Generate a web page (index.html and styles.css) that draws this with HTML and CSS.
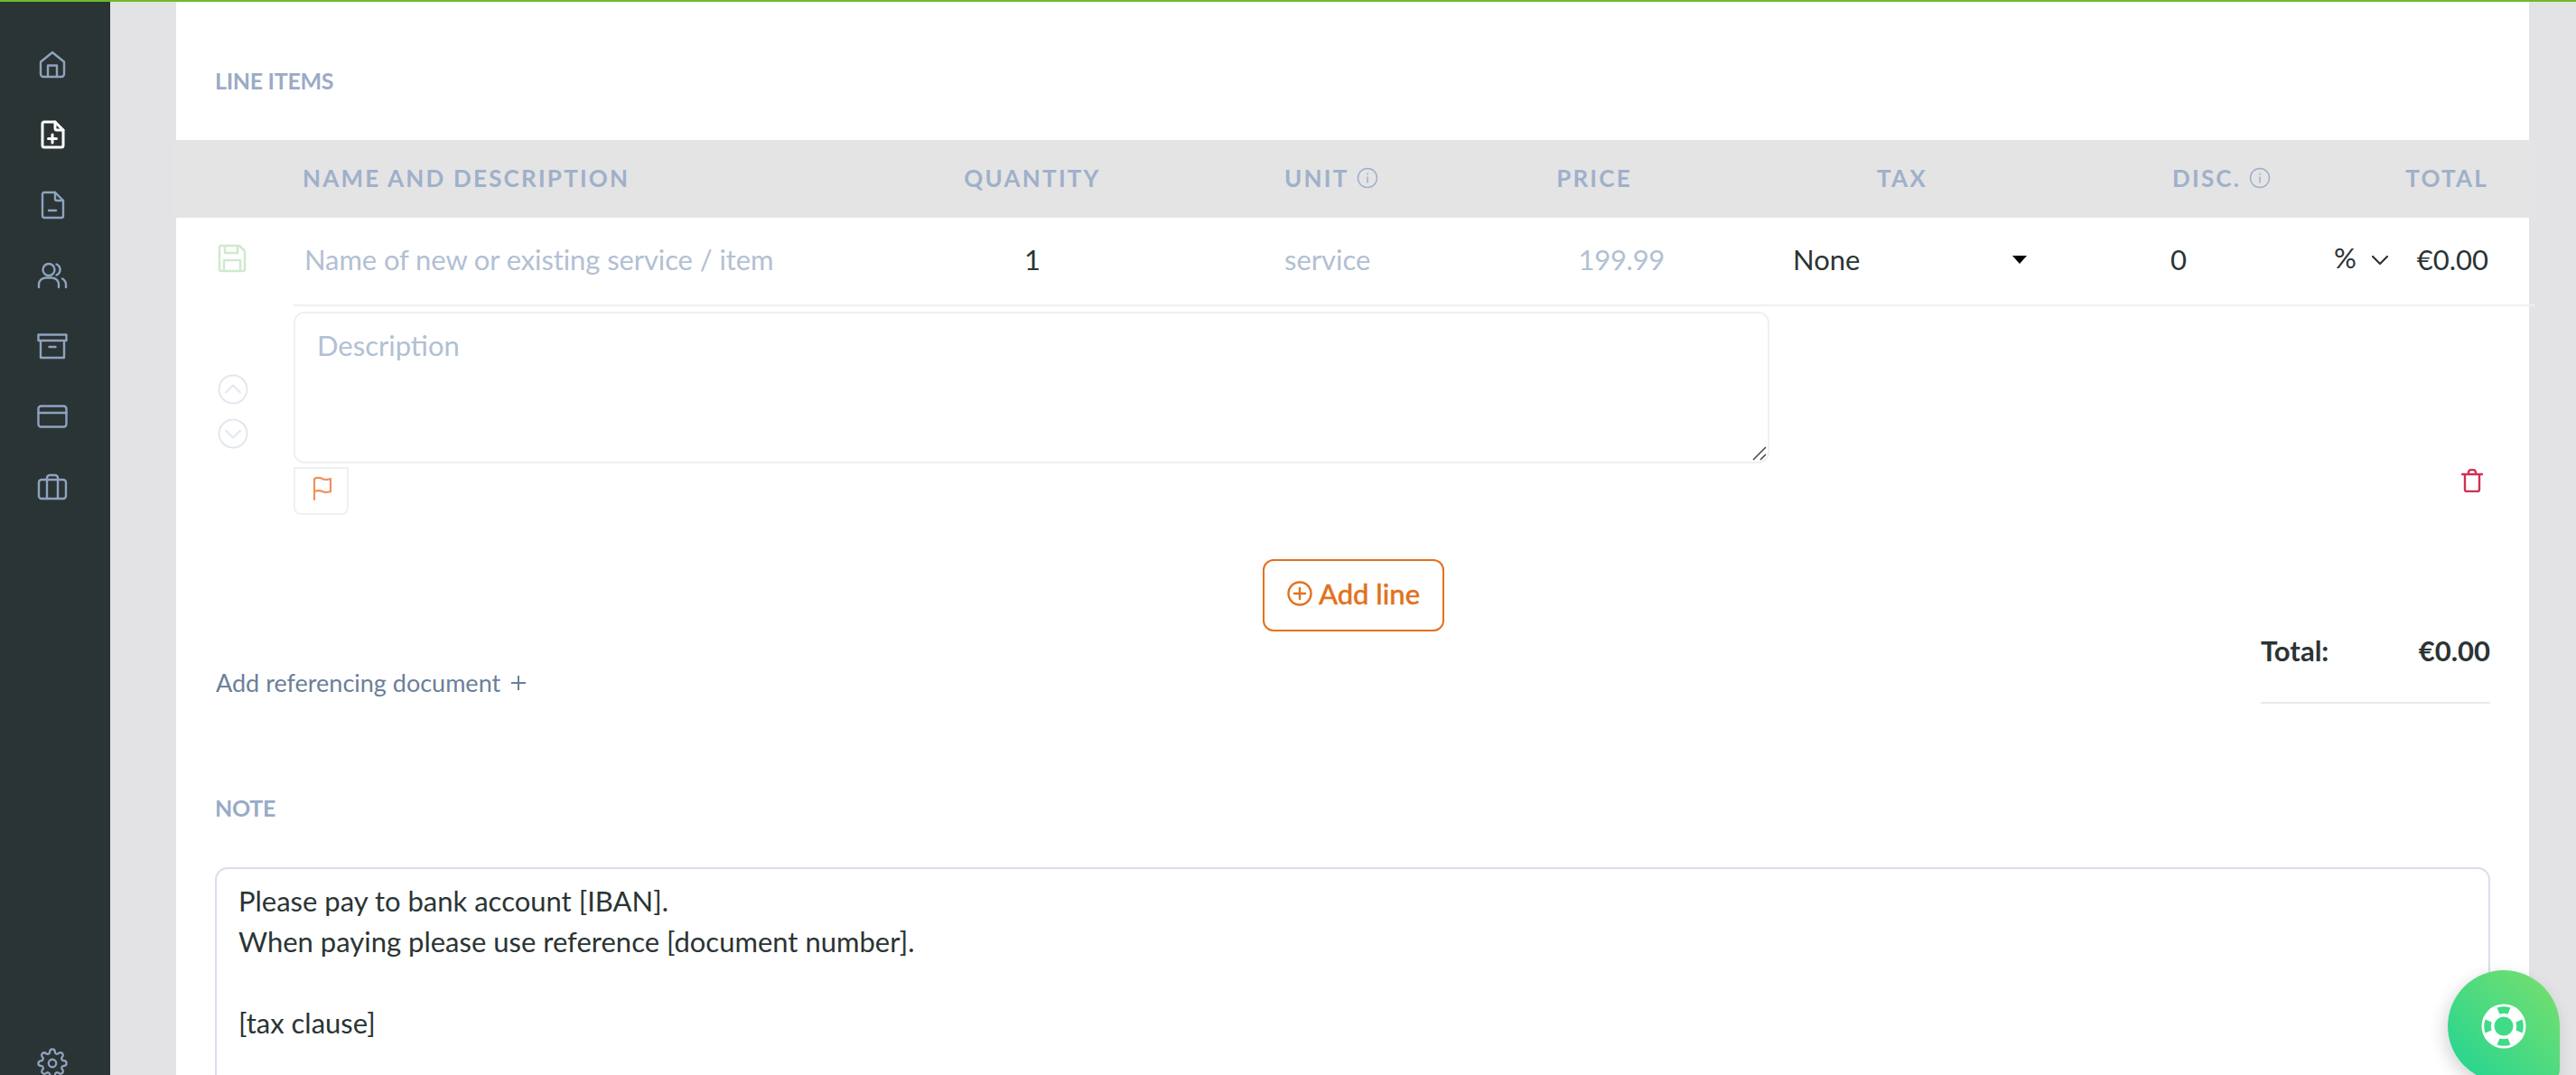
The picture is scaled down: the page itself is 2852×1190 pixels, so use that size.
FILE: index.html
```html
<!DOCTYPE html>
<html lang="en">
<head>
<meta charset="utf-8">
<title>Line items</title>
<link rel="stylesheet" href="styles.css">
</head>
<body>
<div class="page">
  <aside class="sidebar">
    <nav class="nav">
      <a class="nav-item"><svg class="nav-icon" width="32" height="32" viewBox="0 0 32 32"><path d="M3 13.500 16 3l13 10.500V27a3 3 0 0 1-3 3H6a3 3 0 0 1-3-3z"/><path d="M11 30V17.500h10V30"/></svg></a>
      <a class="nav-item nav-item-active"><svg class="nav-icon" width="32" height="32" viewBox="0 0 32 32"><path d="M7 2h12l9 9v17a2 2 0 0 1-2 2H7a2 2 0 0 1-2-2V4a2 2 0 0 1 2-2z"/><path d="M19 2v7a2 2 0 0 0 2 2h7M16 16v9M11.500 20.500h9"/></svg></a>
      <a class="nav-item"><svg class="nav-icon" width="32" height="32" viewBox="0 0 32 32"><path d="M7 2h12l9 9v17a2 2 0 0 1-2 2H7a2 2 0 0 1-2-2V4a2 2 0 0 1 2-2z"/><path d="M19 2v7a2 2 0 0 0 2 2h7M12 22h8"/></svg></a>
      <a class="nav-item"><svg class="nav-icon" width="36" height="32" viewBox="0 0 36 32"><circle cx="14" cy="9.500" r="6.500"/><path d="M3 29v-3a7.500 7.500 0 0 1 7.500-7.500h7A7.500 7.500 0 0 1 25 26v3M22.500 3.500a6.500 6.500 0 0 1 0 12M29 19.500c2.500 1.500 4 3.800 4 6.500v3"/></svg></a>
      <a class="nav-item"><svg class="nav-icon" width="34" height="32" viewBox="0 0 34 32"><path d="M1.500 3.500h31v6.500h-31zM4 10v19h26V10M13.500 17h7"/></svg></a>
      <a class="nav-item"><svg class="nav-icon" width="34" height="28" viewBox="0 0 34 28"><rect x="1.500" y="2.500" width="31" height="23" rx="3"/><path d="M1.500 10h31"/></svg></a>
      <a class="nav-item"><svg class="nav-icon" width="34" height="32" viewBox="0 0 34 32"><rect x="2" y="8" width="30" height="21" rx="3"/><path d="M11 29V6a3 3 0 0 1 3-3h6a3 3 0 0 1 3 3v23"/></svg></a>
    </nav>
    <a class="nav-item nav-item-bottom"><svg class="nav-icon" width="34" height="34" viewBox="0 0 24 24"><circle cx="12" cy="12" r="3"/><path class="thin" d="M19.400 15a1.650 1.650 0 0 0 .33 1.820l.06.06a2 2 0 0 1 0 2.830 2 2 0 0 1-2.830 0l-.06-.06a1.650 1.650 0 0 0-1.820-.33 1.650 1.650 0 0 0-1 1.510V21a2 2 0 0 1-2 2 2 2 0 0 1-2-2v-.09A1.650 1.650 0 0 0 9 19.400a1.650 1.650 0 0 0-1.820.33l-.06.06a2 2 0 0 1-2.830 0 2 2 0 0 1 0-2.830l.06-.06a1.650 1.650 0 0 0 .33-1.820 1.650 1.650 0 0 0-1.510-1H3a2 2 0 0 1-2-2 2 2 0 0 1 2-2h.09A1.650 1.650 0 0 0 4.600 9a1.650 1.650 0 0 0-.33-1.820l-.06-.06a2 2 0 0 1 0-2.830 2 2 0 0 1 2.830 0l.06.06a1.650 1.650 0 0 0 1.820.33H9a1.650 1.650 0 0 0 1-1.510V3a2 2 0 0 1 2-2 2 2 0 0 1 2 2v.09a1.650 1.650 0 0 0 1 1.510 1.650 1.650 0 0 0 1.820-.33l.06-.06a2 2 0 0 1 2.830 0 2 2 0 0 1 0 2.830l-.06.06a1.650 1.650 0 0 0-.33 1.820V9a1.650 1.650 0 0 0 1.510 1H21a2 2 0 0 1 2 2 2 2 0 0 1-2 2h-.09a1.650 1.650 0 0 0-1.510 1z"/></svg></a>
  </aside>

  <main class="main">
    <section class="card">
      <h2 class="section-title section-title-items">LINE ITEMS</h2>

      <div class="table">
        <div class="grid thead">
          <div></div>
          <div class="th th-name">NAME AND DESCRIPTION</div>
          <div class="th th-center">QUANTITY</div>
          <div class="th th-unit">UNIT<svg class="info" width="24" height="24" viewBox="0 0 24 24"><circle cx="12" cy="12" r="10.500"/><path d="M12 11v6M12 7v1"/></svg></div>
          <div class="th th-center">PRICE</div>
          <div class="th th-center">TAX</div>
          <div class="th th-disc">DISC.<svg class="info" width="24" height="24" viewBox="0 0 24 24"><circle cx="12" cy="12" r="10.500"/><path d="M12 11v6M12 7v1"/></svg></div>
          <div class="th th-total">TOTAL</div>
        </div>

        <div class="grid row">
          <div class="cell-save"><svg class="save" width="32" height="32" viewBox="0 0 32 32"><path d="M4 2h20l6 6v20a2 2 0 0 1-2 2H4a2 2 0 0 1-2-2V4a2 2 0 0 1 2-2z"/><path d="M8 2v8h14V2M7 30V18h18v12"/></svg></div>
          <div class="cell cell-name placeholder">Name of new or existing service / item</div>
          <div class="cell cell-center">1</div>
          <div class="cell cell-unit placeholder">service</div>
          <div class="cell cell-price placeholder">199.99</div>
          <div class="cell cell-tax"><span class="tax-value">None</span><span class="caret"></span></div>
          <div class="cell cell-disc"><span class="disc-value">0</span><span class="disc-type">%</span><svg class="chev" width="20" height="12" viewBox="0 0 20 12"><path d="M2 2l8 8 8-8"/></svg></div>
          <div class="cell cell-total">€0.00</div>
        </div>

        <div class="details">
          <div class="movers">
            <svg class="mover" width="34" height="34" viewBox="0 0 34 34"><circle cx="17" cy="17" r="15.500"/><path d="M9 20.500l8-8 8 8"/></svg>
            <svg class="mover" width="34" height="34" viewBox="0 0 34 34"><circle cx="17" cy="17" r="15.500"/><path d="M9 13.500l8 8 8-8"/></svg>
          </div>
          <div class="details-body">
            <div class="description placeholder">Description<svg class="grip" width="16" height="16" viewBox="0 0 16 16"><path d="M15 1 1 15M15 9l-6 6"/></svg></div>
            <button class="flag-btn"><svg class="flag" width="24" height="28" viewBox="0 0 24 28"><path d="M3 26V3c4-2 7-1 9 0s5 1.500 9 0v14c-4 1.500-7 1-9 0s-5-1.500-9 0"/></svg></button>
          </div>
          <svg class="trash" width="24" height="26" viewBox="0 0 24 26"><path d="M1 6h22M4 6v17a2 2 0 0 0 2 2h12a2 2 0 0 0 2-2V6M8 6V4a3 3 0 0 1 3-3h2a3 3 0 0 1 3 3v2"/></svg>
        </div>
      </div>

      <div class="actions">
        <button class="add-line"><svg class="add-icon" width="28" height="28" viewBox="0 0 28 28"><circle cx="14" cy="14" r="12.500"/><path d="M14 8v12M8 14h12"/></svg><span class="add-label">Add line</span></button>
      </div>

      <div class="summary">
        <a class="add-ref">Add referencing document<svg class="plus" width="18" height="18" viewBox="0 0 18 18"><path d="M9 1v16M1 9h16"/></svg></a>
        <div class="totals"><span>Total:</span><span>€0.00</span></div>
      </div>

      <h2 class="section-title section-title-note">NOTE</h2>
      <div class="note">Please pay to bank account [IBAN].<br>When paying please use reference [document number].<br><br>[tax clause]</div>
    </section>
  </main>

  <button class="help"><svg width="50" height="50" viewBox="-25 -25 50 50"><circle r="24.500" fill="#fff"/><circle r="10.500" fill="#3fdb87"/><g fill="#3fdb87"><path d="M-7.500-20.500Q0-23 7.500-20.500L4.500-13.500Q0-15-4.500-13.500z"/><path d="M-7.500-20.500Q0-23 7.500-20.500L4.500-13.500Q0-15-4.500-13.500z" transform="rotate(90)"/><path d="M-7.500-20.500Q0-23 7.500-20.500L4.500-13.500Q0-15-4.500-13.500z" transform="rotate(180)"/><path d="M-7.500-20.500Q0-23 7.500-20.500L4.500-13.500Q0-15-4.500-13.500z" transform="rotate(270)"/></g></svg></button>
</div>
</body>
</html>
```

FILE: styles.css
```css
* { box-sizing: border-box; }
html, body { margin: 0; height: 100%; overflow: hidden; }
body {
  font-family: "Lato", "Liberation Sans", sans-serif;
  color: #2b3434;
  background: #e3e3e5;
}
.page {
  position: relative;
  display: flex;
  height: 100vh;
  overflow: hidden;
  border-top: 2px solid #6cbb2b;
}
.sidebar {
  flex: 0 0 122px;
  display: flex;
  flex-direction: column;
  justify-content: space-between;
  align-items: center;
  background: #2b3434;
  padding: 53px 6px 0 0;
}
.nav { display: flex; flex-direction: column; gap: 46px; }
.nav-item { display: flex; align-items: center; justify-content: center; height: 32px; }
.nav-item-bottom { margin-bottom: -4px; height: 34px; }
.nav-icon { fill: none; stroke: #8fa3c0; stroke-width: 2.400; stroke-linecap: round; stroke-linejoin: round; }
.nav-item-bottom .nav-icon { stroke-width: 1.600; }
.nav-item-active .nav-icon { stroke: #fff; stroke-width: 3; }

.main { flex: 1; padding: 0 52px 0 73px; min-width: 0; }
.card { background: #fff; height: 100%; padding: 0 43px; }

.section-title {
  margin: 0;
  font-size: 25px;
  line-height: 30px;
  font-weight: 700;
  letter-spacing: -.3px;
  color: #9aabc6;
}
.section-title-items { padding-top: 72px; margin-bottom: 51px; }
.section-title-note { margin-top: 100px; margin-bottom: 51px; }

.table { margin: 0 -49px 0 -48px; }
.grid {
  display: grid;
  grid-template-columns: 135px 745px 146px 464px 170px 512px 298px 146px;
  align-items: center;
}
.thead { height: 86px; background: #e4e4e4; }
.th {
  font-size: 26px;
  font-weight: 700;
  letter-spacing: 2.200px;
  color: #9fb0cb;
  display: flex;
  align-items: center;
  padding-bottom: 3px;
}
.th-name { padding-left: 10px; }
.th-center { justify-content: center; }
.th-unit { padding-left: 206px; }
.th-disc { padding-left: 43px; }
.th-total { justify-content: flex-end; padding-right: 51px; }
.info { margin-left: 9px; fill: none; stroke: #9fb0cb; stroke-width: 1.500; stroke-linecap: round; }

.row {
  height: 98px;
  font-size: 31px;
  background-image: linear-gradient(#eef0f2, #eef0f2);
  background-size: calc(100% - 135px) 2px;
  background-position: 135px 100%;
  background-repeat: no-repeat;
}
.cell { padding-bottom: 6px; }
.placeholder { color: #b2c0d3; }
.cell-save { display: flex; justify-content: center; padding-bottom: 8px; }
.save { fill: none; stroke: #cfeacf; stroke-width: 2.500; stroke-linejoin: round; transform: translateX(-1px); }
.cell-name { padding-left: 12px; letter-spacing: -.1px; }
.cell-center { text-align: center; }
.cell-unit { padding-left: 206px; }
.cell-price { text-align: right; padding-right: 7px; letter-spacing: -.3px; }
.cell-tax { display: flex; align-items: center; padding-left: 135px; }
.tax-value { width: 243px; }
.caret { width: 0; height: 0; border-left: 8px solid transparent; border-right: 8px solid transparent; border-top: 9px solid #000; }
.cell-disc { display: flex; align-items: center; padding-left: 41px; }
.disc-value { width: 181px; }
.disc-type { width: 41px; transform: translateY(-2px); }
.chev { fill: none; stroke: #2b3434; stroke-width: 2.200; stroke-linecap: round; stroke-linejoin: round; transform: translateY(1px); }
.cell-total { text-align: right; padding-right: 51px; }

.details { display: flex; align-items: flex-start; height: 232px; }
.movers { flex: 0 0 135px; display: flex; flex-direction: column; align-items: center; gap: 15px; padding-top: 75px; }
.mover { fill: none; stroke: #e3e7ef; stroke-width: 2; stroke-linecap: round; stroke-linejoin: round; }
.details-body { flex: 0 0 1634px; padding-top: 6px; }
.description {
  position: relative;
  width: 1634px;
  height: 168px;
  font-size: 31px;
  line-height: 40px;
  padding: 15px 24px;
  border: 2px solid #eef0f3;
  border-radius: 12px;
}
.grip { position: absolute; right: 1px; bottom: 1px; fill: none; stroke: #444; stroke-width: 1.500; }
.flag-btn {
  display: flex;
  align-items: center;
  justify-content: center;
  width: 61px;
  height: 53px;
  margin-top: 4px;
  padding: 0 0 6px 2px;
  background: #fff;
  border: 2px solid #eef0f3;
  border-radius: 0 0 8px 8px;
}
.flag { fill: none; stroke: #ed915c; stroke-width: 2.200; stroke-linecap: round; stroke-linejoin: round; }
.trash { margin: 180px 0 0 766px; fill: none; stroke: #cf3153; stroke-width: 2.400; stroke-linecap: round; stroke-linejoin: round; }

.actions { display: flex; justify-content: center; margin-top: 48px; padding-left: 2px; }
.add-line {
  display: flex;
  align-items: center;
  justify-content: center;
  gap: 7px;
  width: 201px;
  height: 80px;
  padding: 0 0 4px;
  background: #fff;
  border: 2px solid #e2711d;
  border-radius: 12px;
  color: #e2711d;
  font: 500 31px "Lato", sans-serif;
}
.add-label { -webkit-text-stroke: .4px #e2711d; }
.add-icon { fill: none; stroke: #e2711d; stroke-width: 2.400; stroke-linecap: round; }

.summary { display: flex; justify-content: space-between; align-items: flex-end; height: 80px; }
.add-ref { display: flex; align-items: center; gap: 11px; font-size: 27px; line-height: 40px; color: #6b7f99; margin: 0 0 3px 1px; }
.plus { fill: none; stroke: #6b7f99; stroke-width: 2; }
.totals {
  display: flex;
  justify-content: space-between;
  width: 254px;
  height: 80px;
  padding-top: 1px;
  font-size: 31px;
  line-height: 40px;
  font-weight: 700;
  border-bottom: 2px solid #e8e9ea;
}

.note {
  height: 400px;
  padding: 13px 24px;
  font-size: 31px;
  line-height: 45px;
  border: 2px solid #d8dfe9;
  border-radius: 14px;
}

.help {
  position: absolute;
  left: 2710px;
  top: 1072px;
  width: 124px;
  height: 124px;
  display: flex;
  align-items: center;
  justify-content: center;
  padding: 0;
  border: 0;
  border-radius: 62px 62px 14px 62px;
  background: linear-gradient(45deg, #1fd494, #7be06c);
  box-shadow: -4px 6px 18px rgba(0, 0, 0, .16);
}
```
